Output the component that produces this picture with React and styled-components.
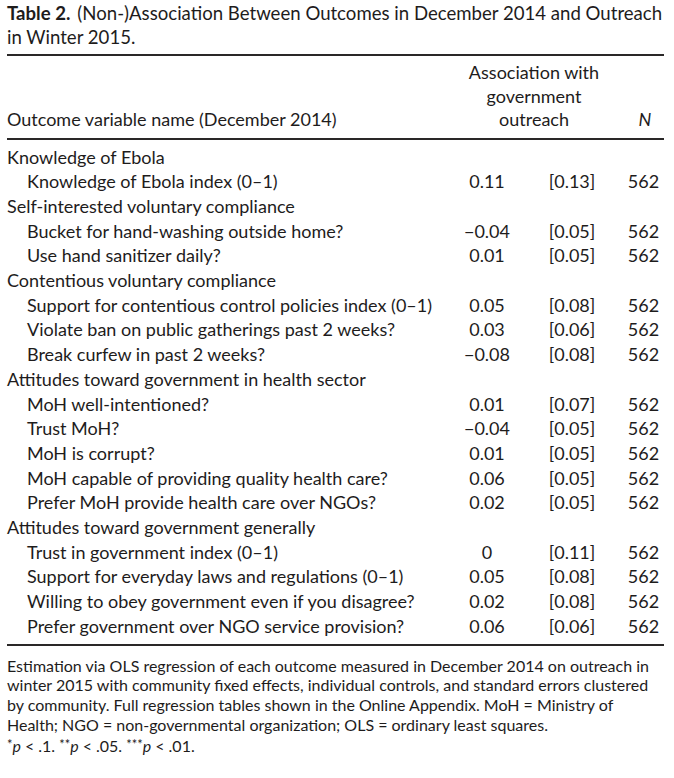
import styled, { createGlobalStyle } from "styled-components";

const GlobalStyle = createGlobalStyle`
  body {
    margin: 0;
    background: #ffffff;
    color: #1e1c1c;
    font-family: "Lato", "Open Sans", sans-serif;
  }
`;

const SECTIONS = [
    {
        title: "Knowledge of Ebola",
        rows: [["Knowledge of Ebola index (0–1)", "0.11", "[0.13]", "562"]],
    },
    {
        title: "Self-interested voluntary compliance",
        rows: [
            ["Bucket for hand-washing outside home?", "−0.04", "[0.05]", "562"],
            ["Use hand sanitizer daily?", "0.01", "[0.05]", "562"],
        ],
    },
    {
        title: "Contentious voluntary compliance",
        rows: [
            ["Support for contentious control policies index (0–1)", "0.05", "[0.08]", "562"],
            ["Violate ban on public gatherings past 2 weeks?", "0.03", "[0.06]", "562"],
            ["Break curfew in past 2 weeks?", "−0.08", "[0.08]", "562"],
        ],
    },
    {
        title: "Attitudes toward government in health sector",
        rows: [
            ["MoH well-intentioned?", "0.01", "[0.07]", "562"],
            ["Trust MoH?", "−0.04", "[0.05]", "562"],
            ["MoH is corrupt?", "0.01", "[0.05]", "562"],
            ["MoH capable of providing quality health care?", "0.06", "[0.05]", "562"],
            ["Prefer MoH provide health care over NGOs?", "0.02", "[0.05]", "562"],
        ],
    },
    {
        title: "Attitudes toward government generally",
        rows: [
            ["Trust in government index (0–1)", "0", "[0.11]", "562"],
            ["Support for everyday laws and regulations (0–1)", "0.05", "[0.08]", "562"],
            ["Willing to obey government even if you disagree?", "0.02", "[0.08]", "562"],
            ["Prefer government over NGO service provision?", "0.06", "[0.06]", "562"],
        ],
    },
];

const NOTE_LINES = [
    "Estimation via OLS regression of each outcome measured in December 2014 on outreach in",
    "winter 2015 with community fixed effects, individual controls, and standard errors clustered",
    "by community. Full regression tables shown in the Online Appendix. MoH = Ministry of",
    "Health; NGO = non-governmental organization; OLS = ordinary least squares.",
];

const Page = styled.div`
  width: 657px;
  padding: 1px 10px 0 7px;
`;

const Caption = styled.div`
  font-size: 18.6px;
  line-height: 24px;
  white-space: nowrap;
`;

const CaptionLabel = styled.span`
  font-weight: 700;
  margin-right: 7px;
`;

const Table = styled.div`
  margin-top: 5px;
  border-top: 2px solid #2a2828;
  border-bottom: 2px solid #2a2828;
`;

const Grid = styled.div`
  display: grid;
  grid-template-columns: 1fr 80px 90px 47px;
  font-size: 18px;
  line-height: ${(p) => p.$lh || "24.7px"};
  white-space: nowrap;
`;

const Head = styled(Grid)`
  padding: 5px 0 6px;
  border-bottom: 2px solid #2a2828;
  align-items: end;
`;

const HeadGroup = styled.div`
  grid-column: span 2;
  text-align: center;
  white-space: normal;
  padding-left: 4px;
`;

const Body = styled.div`
  padding: 5px 0 5px;
`;

const Label = styled.div`
  padding-left: ${(p) => (p.$indent ? "20px" : "0")};
`;

const Cell = styled.div`
  text-align: center;
  padding-left: ${(p) => p.$shift || "0"};
`;

const Italic = styled.i`
  font-style: italic;
`;

const Note = styled.div`
  margin-top: 10px;
  font-size: 16px;
  line-height: 19.8px;
  white-space: nowrap;
`;

const NoteLine = styled.div``;

const Star = styled.span`
  font-size: 13px;
  vertical-align: 3px;
`;

const Sym = styled.span`
  margin: 0 4px;
`;

export default function App() {
    return (
        <Page>
            <GlobalStyle />
            <Caption>
                <CaptionLabel>Table 2.</CaptionLabel>
                (Non-)Association Between Outcomes in December 2014 and Outreach
                <br />
                in Winter 2015.
            </Caption>
            <Table>
                <Head $lh="23.5px">
                    <Label>Outcome variable name (December 2014)</Label>
                    <HeadGroup>Association with government outreach</HeadGroup>
                    <Cell $shift="9px">
                        <Italic>N</Italic>
                    </Cell>
                </Head>
                <Body>
                    {SECTIONS.map((section) => (
                        <div key={section.title}>
                            <Grid>
                                <Label>{section.title}</Label>
                            </Grid>
                            {section.rows.map(([label, coef, se, n]) => (
                                <Grid key={label}>
                                    <Label $indent>{label}</Label>
                                    <Cell>{coef}</Cell>
                                    <Cell>{se}</Cell>
                                    <Cell $shift="6px">{n}</Cell>
                                </Grid>
                            ))}
                        </div>
                    ))}
                </Body>
            </Table>
            <Note>
                {NOTE_LINES.map((line) => (
                    <NoteLine key={line}>{line}</NoteLine>
                ))}
                <NoteLine>
                    <Star>*</Star>
                    <Italic>p</Italic>
                    <Sym>&lt;</Sym>.1. <Star>**</Star>
                    <Italic>p</Italic>
                    <Sym>&lt;</Sym>.05. <Star>***</Star>
                    <Italic>p</Italic>
                    <Sym>&lt;</Sym>.01.
                </NoteLine>
            </Note>
        </Page>
    );
}
